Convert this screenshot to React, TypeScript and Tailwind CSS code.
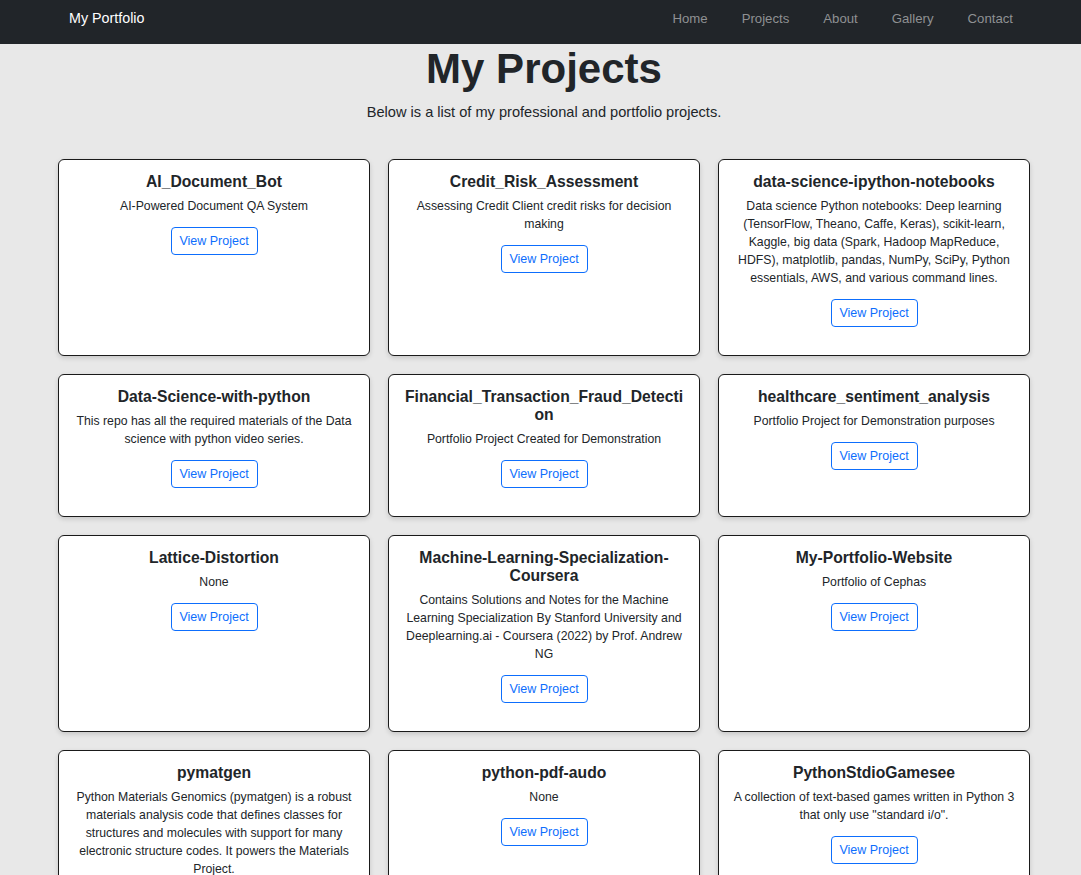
const projects = [
  { name: 'AI_Document_Bot', desc: 'AI-Powered Document QA System' },
  { name: 'Credit_Risk_Assessment', desc: 'Assessing Credit Client credit risks for decision making' },
  {
    name: 'data-science-ipython-notebooks',
    desc: 'Data science Python notebooks: Deep learning (TensorFlow, Theano, Caffe, Keras), scikit-learn, Kaggle, big data (Spark, Hadoop MapReduce, HDFS), matplotlib, pandas, NumPy, SciPy, Python essentials, AWS, and various command lines.'
  },
  { name: 'Data-Science-with-python', desc: 'This repo has all the required materials of the Data science with python video series.' },
  { name: 'Financial_Transaction_Fraud_Detection', desc: 'Portfolio Project Created for Demonstration' },
  { name: 'healthcare_sentiment_analysis', desc: 'Portfolio Project for Demonstration purposes' },
  { name: 'Lattice-Distortion', desc: 'None' },
  {
    name: 'Machine-Learning-Specialization-Coursera',
    desc: 'Contains Solutions and Notes for the Machine Learning Specialization By Stanford University and Deeplearning.ai - Coursera (2022) by Prof. Andrew NG'
  },
  { name: 'My-Portfolio-Website', desc: 'Portfolio of Cephas' },
  {
    name: 'pymatgen',
    desc: 'Python Materials Genomics (pymatgen) is a robust materials analysis code that defines classes for structures and molecules with support for many electronic structure codes. It powers the Materials Project.'
  },
  { name: 'python-pdf-audo', desc: 'None' },
  { name: 'PythonStdioGamesee', desc: 'A collection of text-based games written in Python 3 that only use "standard i/o".' }
];

const links = ['Home', 'Projects', 'About', 'Gallery', 'Contact'];

export default function App() {
  return (
    <div className="min-h-screen bg-[#e8e8e8] text-[#212529] font-['Liberation_Sans',Arial,sans-serif]">
      {/* Navbar */}
      <nav className="h-[44px] bg-[#212529] flex items-center justify-between px-[68px] pb-[6px]">
        <span className="ml-[1px] text-white text-[14.3px]">My Portfolio</span>
        <ul className="flex gap-[34px] text-[13.2px] text-[#8f9193]">
          {links.map((l) => (
            <li key={l}>{l}</li>
          ))}
        </ul>
      </nav>

      {/* Header */}
      <div className="text-center pl-[7px]">
        <h1 className="text-[42px] font-bold leading-[50px]">My Projects</h1>
        <p className="mt-[7px] text-[14.6px] leading-[22px]">
          Below is a list of my professional and portfolio projects.
        </p>
      </div>

      {/* Cards */}
      <div className="pl-[58px] pt-[36px] pb-10 grid grid-cols-[repeat(3,312px)] gap-x-[18px] gap-y-[18px]">
        {projects.map((p) => (
          <div
            key={p.name}
            className="bg-white border border-[#1a1a1a] rounded-[6px] shadow-[0_2px_5px_rgba(0,0,0,0.15)] px-[13px] pt-[12.5px] pb-[28px] text-center flex flex-col items-center"
          >
            <h3 className="text-[15.7px] font-bold leading-[18px] w-full break-words">{p.name}</h3>
            <p className="mt-[6.5px] text-[12.25px] leading-[18px]">{p.desc}</p>
            <button className="mt-[12px] h-[28px] w-[87px] border border-[#0d6efd] text-[#0d6efd] rounded-[4px] text-[12.5px]">
              View Project
            </button>
          </div>
        ))}
      </div>
    </div>
  );
}
